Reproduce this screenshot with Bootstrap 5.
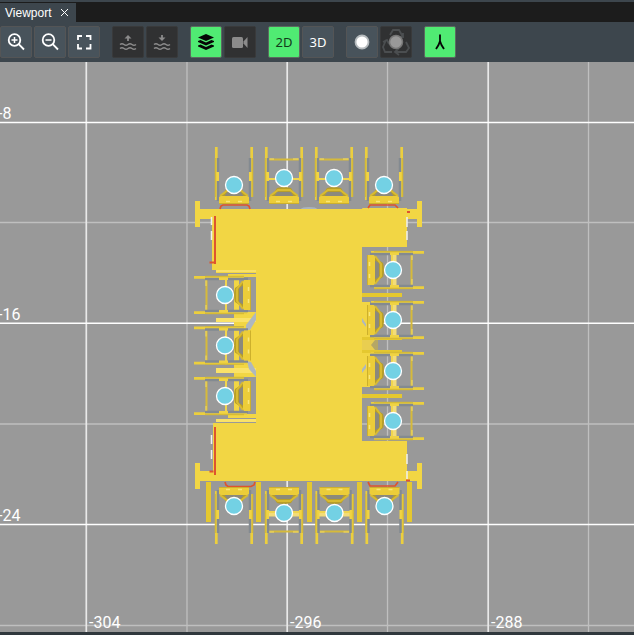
<!DOCTYPE html>
<html lang="en">
<head>
<meta charset="utf-8">
<meta name="viewport" content="width=device-width, initial-scale=1">
<title>Viewport</title>
<link href="https://cdn.jsdelivr.net/npm/bootstrap@5.3.0/dist/css/bootstrap.min.css" rel="stylesheet">
<script src="https://cdn.jsdelivr.net/npm/bootstrap@5.3.0/dist/js/bootstrap.bundle.min.js" defer></script>
<style>
body{background:#3d464d;font-family:Roboto,"Liberation Sans",sans-serif}
.tabstrip{background:#1c1c1c;height:20px;margin-top:2px}
.view-tab{background:#3d464d;color:#fff;font:12px/18px "Liberation Sans",Arial,sans-serif;margin-top:1px;padding:0 7px 0 5px;gap:9px}
.tab-close{color:#fff;line-height:0}
.toolbar{gap:12px;padding:4px 0;background:#3d464d}
.tool-group{gap:2px}
.tool{--bs-btn-padding-x:0;--bs-btn-padding-y:0;--bs-btn-border-radius:2px;--bs-btn-bg:#48535b;--bs-btn-color:#fff;--bs-btn-border-color:#545556;--bs-btn-hover-bg:#56626b;--bs-btn-hover-color:#fff;--bs-btn-active-bg:#50eb73;--bs-btn-active-color:#050505;--bs-btn-active-border-color:#5c6a5f;--bs-btn-disabled-bg:#303132;--bs-btn-disabled-color:#8b8b8b;--bs-btn-disabled-border-color:#393a3b;--bs-btn-disabled-opacity:1;width:32px;height:32px;font:13px/20px "Noto Sans","Open Sans",sans-serif}
.tool svg{width:30px;height:30px;fill:none;stroke:currentColor;stroke-width:1.8}
.tool-text.active{--bs-btn-active-color:#123a1b}
.scene{background:#999;min-height:0}
.scene svg{display:block;width:100%;height:100%}
.axis{font:16px Roboto,"Liberation Sans",sans-serif;fill:#fff}
.statusline{height:3px;background:#30383d}
</style>
</head>
<body class="vh-100 d-flex flex-column overflow-hidden">
<header class="flex-shrink-0">
  <div class="tabstrip d-flex">
    <div class="view-tab d-flex align-items-center">
      <span>Viewport</span>
      <button type="button" class="tab-close border-0 bg-transparent p-0" aria-label="Close Viewport"><svg width="9" height="9" viewBox="0 0 9 9" fill="none" stroke="currentColor"><path d="M1 1l7 7M8 1L1 8"/></svg></button>
    </div>
  </div>
  <div class="toolbar d-flex" role="toolbar" aria-label="Viewport tools">
    <div class="tool-group d-flex">
      <button type="button" class="btn tool" aria-label="Zoom in"><svg viewBox="0 0 30 30"><circle cx="13.500" cy="13" r="5.800"/><path d="M17.700 17.200l5.300 5.300"/><path d="M10.500 13h6M13.500 10v6" stroke-width="1.500"/></svg></button>
      <button type="button" class="btn tool" aria-label="Zoom out"><svg viewBox="0 0 30 30"><circle cx="13.500" cy="13" r="5.800"/><path d="M17.700 17.200l5.300 5.300"/><path d="M10.500 13h6" stroke-width="1.500"/></svg></button>
      <button type="button" class="btn tool" aria-label="Fit to view"><svg viewBox="0 0 30 30"><path d="M9 13V9h4M17 9h4.500v4M21.500 17v4.500H17M13 21.500H9V17"/></svg></button>
    </div>
    <div class="tool-group d-flex">
      <button type="button" class="btn tool" disabled aria-label="Raise"><svg viewBox="0 0 30 30"><path d="M15 14V9" /><path d="M11.500 11.500L15 8l3.500 3.500z" fill="currentColor" stroke="none"/><path d="M7 17.500q2-1.500 4 0t4 0 4 0 4 0M7 21.500q2-1.500 4 0t4 0 4 0 4 0" stroke-width="1.500"/></svg></button>
      <button type="button" class="btn tool" disabled aria-label="Lower"><svg viewBox="0 0 30 30"><path d="M15 8v5"/><path d="M11.500 10.500L15 14l3.500-3.500z" fill="currentColor" stroke="none"/><path d="M7 17.500q2-1.500 4 0t4 0 4 0 4 0M7 21.500q2-1.500 4 0t4 0 4 0 4 0" stroke-width="1.500"/></svg></button>
    </div>
    <div class="tool-group d-flex">
      <button type="button" class="btn tool active" aria-label="Layers" aria-pressed="true"><svg viewBox="0 0 30 30"><g fill="currentColor" stroke="none"><path d="M15 7l8 3.500-8 3.500-8-3.500z"/><path d="M7 14l2.500-1 5.500 2.500 5.500-2.500L23 14v1l-8 3.500L7 15z"/><path d="M7 18.500l2.500-1L15 20l5.500-2.500 2.500 1v1L15 23l-8-3.500z"/></g></svg></button>
      <button type="button" class="btn tool" disabled aria-label="Camera"><svg viewBox="0 0 30 30"><g fill="currentColor" stroke="none"><rect x="7" y="10" width="11" height="11" rx="1.500"/><path d="M18.500 14.500l4-4.500v11l-4-4.500z"/></g></svg></button>
    </div>
    <div class="tool-group d-flex">
      <button type="button" class="btn tool tool-text active" aria-pressed="true">2D</button>
      <button type="button" class="btn tool tool-text">3D</button>
    </div>
    <div class="tool-group d-flex">
      <button type="button" class="btn tool" aria-label="Point view"><svg viewBox="0 0 30 30"><circle cx="15" cy="15" r="6.500" fill="#fff" stroke="#b5babd" stroke-width="1.800"/></svg></button>
      <button type="button" class="btn tool" disabled aria-label="Orbit"><svg viewBox="0 0 30 30"><g stroke="#4b4e50"><path d="M9 8l3-5h6l4 7M18 10h4V6M5 13l-3 7 2 5h7M2 15l4-2 2 4M25 15l3 6-3 4H15M18 21l-4 4 4 3"/></g><circle cx="15" cy="15" r="6.500" fill="#999" stroke="#777" stroke-width="1.500"/></svg></button>
    </div>
    <div class="tool-group d-flex">
      <button type="button" class="btn tool active" aria-label="Snap" aria-pressed="true"><svg viewBox="0 0 30 30"><path d="M15 7.500V14l-1.500 4-2.500 4M15 14l1.500 4 2.500 4"/></svg></button>
    </div>
  </div>
</header>
<main class="scene flex-grow-1">
<svg viewBox="0 62 634 570" preserveAspectRatio="xMinYMin slice" role="img" aria-label="Plan of a table with sixteen chairs">
  <defs>
    <g id="frame">
      <path d="M-13 19L-7 10Q0 8 7 10L13 19" fill="#b79e2a"/>
      <path d="M-7 14h14l3 5h-20z" fill="#8b897c"/>
      <path d="M-14 18l8-6h12l8 6" fill="none" stroke="#d8bb30" stroke-width="2"/>
      <path d="M-17.700-31v53M17.700-31v50" stroke="#eccf3d" stroke-width="2.700"/>
      <path d="M-18.700-20v39M18.700-20v39" stroke="#d3b733"/>
      <path d="M-16-20v14M-16 3v20M16-20v14M16 3v20" stroke="#838a91" stroke-width="2.500"/>
      <path d="M-16-6v9M16-6v9" stroke="#f0d345" stroke-width="2"/>
      <path d="M-15 19l2-1h26l2 1v7h-30z" fill="#eccd39"/>
      <path d="M-15 25.500h30" stroke="#cdb02c"/>
      <path d="M-8 23.500h4M4 23.500h4" stroke="#f8e77b" stroke-width="1.500"/>
    </g>
    <g id="chair">
      <path d="M-16-18.500h32" stroke="#d6ba3a" stroke-width="2"/>
      <path d="M-15-19h5M9-19h6" stroke="#f6de65"/>
      <path d="M-19 1h38" stroke="#f0d54f" stroke-width="2"/>
      <use href="#frame"/>
      <circle r="8.500" fill="#73d1e4" stroke="#fff" stroke-width="1.300"/>
    </g>
    <g id="wide-chair">
      <path d="M-18-1.500h36" stroke="#f2dc79" stroke-width="4"/>
      <use href="#chair"/>
    </g>
    <g id="corner-chair">
      <use href="#frame"/>
      <circle cy="7" r="8.500" fill="#73d1e4" stroke="#fff" stroke-width="1.300"/>
    </g>
  </defs>
  <g fill="none" stroke="#bfbfbf">
    <path d="M187 62v570M387.500 62v570M588.500 62v570M0 222.500h2000M0 424h2000M0 625.500h2000" stroke-width="1.300"/>
    <path d="M86.300 62v570M287.200 62v570M488.200 62v570" stroke="#e9e9e9" stroke-width="1.700"/>
    <path d="M0 122.500h2000M0 323.300h2000M0 524.500h2000" stroke="#fff" stroke-width="1.400"/>
  </g>
  <path d="M206 482h5v40h-5zM256 482h5v40h-5zM307 482h5v40h-5zM357 482h5v40h-5zM407 482h5v40h-5z" fill="#e5c82f"/>
  <ellipse cx="309" cy="209" rx="8" ry="2" fill="#aab4be"/>
  <g fill="#f2d644">
    <path d="M195 201h5v8h162l.5-1H407v1h10v-8h5v26h-5v-8h-10v28h-45v194h45v30h10v-8h5v26h-5v-8H200v8h-5v-26h5v8h13v-48h43V273h-40v-3h-4v-51h-12v8h-5z"/>
    <path d="M234 312h22v14h-22zM234 363h22v14h-22zM244 326h12v38h-12zM362 302h8l6 14-2 22h-12zM362 352h12l2 16-6 19h-8z"/>
    <path d="M228 274h28v3h-28zM228 414h28v4h-28zM234 278h5v34h-5zM234 328h5v34h-5zM234 379h5v34h-5zM250 328h6v34h-6z"/>
  </g>
  <path d="M216 318h40v4h-40zM216 368h40v5h-40zM216 270h40v2h-40zM216 419h40v3h-40z" fill="#fae268"/>
  <path d="M362 293h40v4h-40zM362 394h40v4h-40zM362 337h40v3h-40zM362 350h40v3h-40z" fill="#e5c82f"/>
  <path d="M362 340h14v10h-14z" fill="#e9ce50"/>
  <path d="M371 345l4-5h3v10h-3z" fill="#b5a766"/>
  <g fill="#aeb7bf"><path d="M256 312v8l-6 10h-4v-5zM247 361l4 1 5 9v6l-7-8zM362 318l4 6v3l-4-5zM366 364v4l-4 5v-4z"/></g>
  <g fill="none" stroke="#de542e">
    <path d="M215 216v48M215 427v48" stroke-width="2"/>
    <path d="M209.500 262.500h5M407 212h3M209.500 471.500h4M406 480.500h4" stroke-width="2"/>
    <path d="M220 209l1-3 2-1h24l2 1 1 3M368 208l2-3h25l3 3M225 482l1 3 2 1.500h23l3-1.500 1-3M368 482l2 4h25l3-4" stroke-width="1.700"/>
  </g>
  <path d="M211.500 217v8M211.500 231v9M211.500 435v9M211.500 450v9M407 217v10M407 231v9M407 454v10M407 471v8" stroke="#f0f1f1" stroke-width="1.500"/>
  <use href="#corner-chair" x="234" y="178"/><use href="#chair" x="284" y="178"/><use href="#chair" x="334" y="178"/><use href="#corner-chair" x="384" y="178"/>
  <use href="#corner-chair" transform="translate(234 513) scale(1 -1)"/><use href="#wide-chair" transform="translate(284 513) scale(1 -1)"/><use href="#wide-chair" transform="translate(334.500 513) scale(1 -1)"/><use href="#corner-chair" transform="translate(384.500 513) scale(1 -1)"/>
  <g id="left-seats"><use href="#chair" transform="translate(225 295) rotate(-90)"/><use href="#chair" transform="translate(225 345.500) rotate(-90)"/><use href="#chair" transform="translate(225 396) rotate(-90)"/></g>
  <g id="right-seats"><use href="#wide-chair" transform="translate(393 270) rotate(90)"/><use href="#wide-chair" transform="translate(393 320) rotate(90)"/><use href="#wide-chair" transform="translate(393 371) rotate(90)"/><use href="#wide-chair" transform="translate(393 421) rotate(90)"/></g>
  <g class="axis"><text x="-2" y="119">-8</text><text x="-2" y="320">-16</text><text x="-2" y="521">-24</text><text x="89" y="628">-304</text><text x="290" y="628">-296</text><text x="491" y="628">-288</text></g>
</svg>
</main>
<footer class="statusline flex-shrink-0"></footer>
</body>
</html>
